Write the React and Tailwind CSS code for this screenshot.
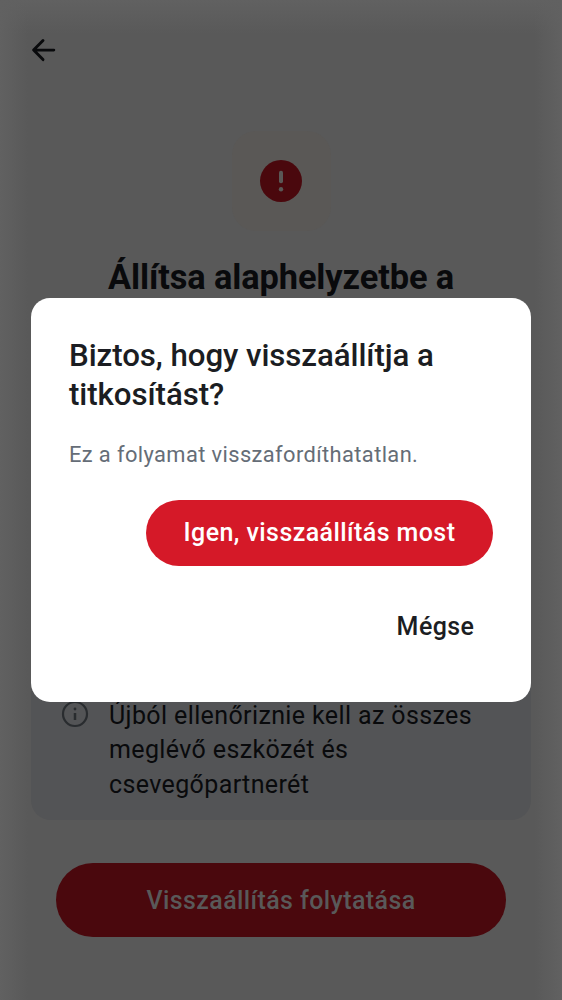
export default function App() {
  return (
    <div className="relative h-[1000px] w-[562px] overflow-hidden bg-[#595959] bg-[linear-gradient(to_right,#616161,#59595900_28px,#59595900_534px,#616161),linear-gradient(to_bottom,#616161,#59595900_34px)] font-['Roboto',sans-serif] text-[#090a0c]">
      <main className="flex h-full flex-col px-[31px]">
        <header className="flex h-[100px] items-center">
          <svg className="h-[25px] w-[25px]" viewBox="0 0 25 25" fill="none" stroke="#090a0c" strokeWidth="2.9" strokeLinecap="round" strokeLinejoin="round"><path d="M22.8 12.1H2.6M12 2.6L2.6 12.1L12 21.6" /></svg>
        </header>
        <div className="mx-auto mt-[31px] flex h-[100px] w-[99px] shrink-0 items-center justify-center rounded-[24px] bg-[#5a5856]">
          <svg className="h-[42px] w-[42px]" viewBox="0 0 42 42"><circle cx="21" cy="21" r="21" fill="#4a080d" /><rect x="19" y="10.7" width="4" height="12.6" rx="1.8" fill="#5a5856" /><circle cx="21" cy="29.3" r="2.2" fill="#5a5856" /></svg>
        </div>
        <h1 className="mt-[23px] whitespace-nowrap text-center text-[34.375px] font-bold leading-[46px] tracking-[-0.1px]">Állítsa alaphelyzetbe a</h1>
        <section className="mt-[360px] flex h-[160px] shrink-0 items-start gap-[21px] rounded-[20px] bg-[#535456] pl-[30px] pt-[39px]">
          <svg className="mt-px h-[28px] w-[28px] shrink-0" viewBox="0 0 28 28"><circle cx="14" cy="14" r="12" fill="none" stroke="#292c2f" strokeWidth="2.2" /><path d="M14 13v7" stroke="#292c2f" strokeWidth="2.5" /><circle cx="14" cy="9" r="1.4" fill="#292c2f" /></svg>
          <p className="-ml-px whitespace-pre text-[25px] leading-[34.375px] tracking-[0.38px]">{"Újból ellenőriznie kell az összes\nmeglévő eszközét és\ncsevegőpartnerét"}</p>
        </section>
        <button className="mx-[25px] mt-[42.6px] h-[74.8px] shrink-0 rounded-full bg-[#4a080d] pt-px text-[25px] font-medium tracking-[0.4px] text-[#595959]">Visszaállítás folytatása</button>
      </main>
      <div role="dialog" className="absolute left-[31px] top-[298.4px] flex h-[403.2px] w-[500px] flex-col rounded-[19px] bg-white px-[38px] pt-[37.6px] text-[#1b1d22]">
        <h2 className="whitespace-pre text-[31.25px] font-medium leading-[39px] tracking-[-0.07px]">{"Biztos, hogy visszaállítja a\ntitkosítást?"}</h2>
        <p className="mt-[25px] text-[21.875px] leading-[32px] tracking-[0.39px] text-[#656d77]">Ez a folyamat visszafordíthatatlan.</p>
        <button className="mt-[29px] h-[65.6px] w-[347px] shrink-0 self-end rounded-full bg-[#d51928] text-[25px] font-medium tracking-[0.42px] text-white">Igen, visszaállítás most</button>
        <button className="mr-[18.6px] mt-[42.4px] self-end text-[25px] font-medium leading-[38px] tracking-[0.42px]">Mégse</button>
      </div>
    </div>
  );
}
